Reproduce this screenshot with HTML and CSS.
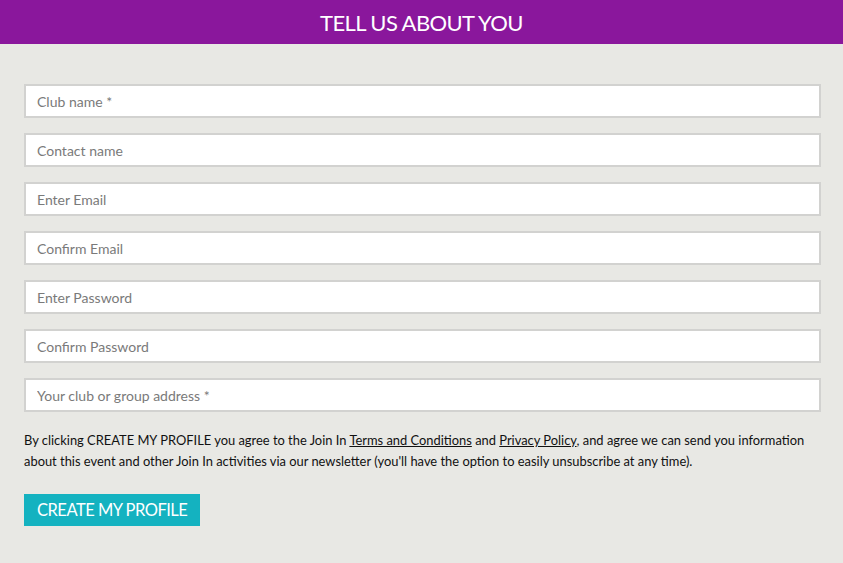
FILE: index.html
```html
<!DOCTYPE html>
<html>
<head>
<meta charset="utf-8">
<link rel="stylesheet" href="styles.css">
</head>
<body>
<header class="bar"><h1 class="title">TELL US ABOUT YOU</h1></header>
<main class="form">
  <div class="fields">
    <input class="field" placeholder="Club name *">
    <input class="field" placeholder="Contact name">
    <input class="field" placeholder="Enter Email">
    <input class="field" placeholder="Confirm Email">
    <input class="field" placeholder="Enter Password">
    <input class="field" placeholder="Confirm Password">
    <input class="field" placeholder="Your club or group address *">
  </div>
  <p class="terms">By clicking CREATE MY PROFILE you agree to the Join In <a href="#">Terms and Conditions</a> and <a href="#">Privacy Policy</a>, and agree we can send you information about this event and other Join In activities via our newsletter (you'll have the option to easily unsubscribe at any time).</p>
  <button class="submit">CREATE MY PROFILE</button>
</main>
</body>
</html>
```
FILE: styles.css
```css
html, body { margin: 0; padding: 0; }
body {
  background: #e8e8e4;
  font-family: "Lato", "Open Sans", sans-serif;
  width: 843px;
  height: 563px;
  overflow: hidden;
}
.bar {
  background: #8a179c;
  height: 44px;
  display: flex;
  align-items: center;
  justify-content: center;
}
.title {
  margin: 0;
  color: #fff;
  font-size: 22px;
  font-weight: 400;
  letter-spacing: -0.6px;
}
.form {
  padding: 40px 22px 0 24px;
}
.fields {
  display: flex;
  flex-direction: column;
  gap: 15px;
}
.field {
  box-sizing: border-box;
  height: 34px;
  width: 797px;
  border: 2px solid #d2d2d0;
  background: #fff;
  padding: 0 11px;
  font-family: inherit;
  font-size: 14px;
  color: #333;
  outline: none;
}
.field::placeholder { color: #7a7a7a; }
.terms {
  margin: 18px 0 0;
  font-size: 12.9px;
  line-height: 21px;
  color: #111;
  width: 790px;
}
.terms a { color: #111; text-decoration: underline; }
.submit {
  margin-top: 22px;
  height: 32px;
  padding: 0 13px;
  border: none;
  background: #14b2c0;
  color: #fff;
  font-family: inherit;
  font-size: 16.5px;
  letter-spacing: -0.5px;
}
```
